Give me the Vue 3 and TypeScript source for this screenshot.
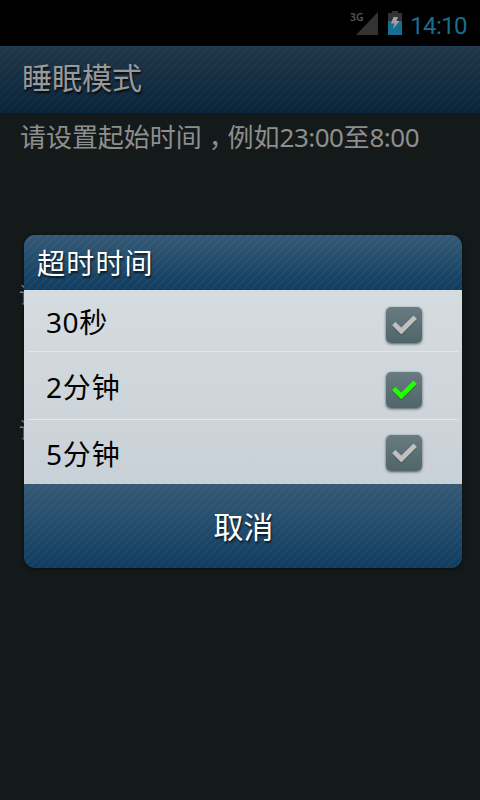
<script setup lang="ts">
import { ref } from 'vue'

interface Option {
  count: string
  unit: string
  size: string
}

const options: Option[] = [
  { count: '30', unit: '秒', size: 'first' },
  { count: '2', unit: '分钟', size: 'middle' },
  { count: '5', unit: '分钟', size: 'last' },
]
const selected = ref(1)
</script>

<template>
  <div class="screen">
    <header class="status">
      <svg class="signal" width="30" height="26" viewBox="0 0 30 26">
        <path d="M29 1V24H7Z" fill="#333" />
        <text x="1" y="10" font-size="10.5" font-weight="600" fill="#555">3G</text>
      </svg>
      <svg class="battery" width="14" height="24" viewBox="0 0 14 24">
        <path d="M4 0H10V2H14V10H0V2H4Z" fill="#333" />
        <path d="M0 10H14V24H0Z" fill="#166f93" />
        <path d="M5.5 6H10L8.5 10H11.5L5 18L6.5 12.5H3Z" fill="#a0a0a0" />
      </svg>
      <span class="clock">14:10</span>
    </header>
    <div class="titlebar"><h1>睡眠模式</h1></div>
    <main class="content">
      <p>请设置起始时间<span class="comma">，</span>例如<span class="time">23:00</span>至<span class="time">8:00</span></p>
      <p class="second">请</p>
      <p class="third">请</p>
    </main>

    <section class="dialog">
      <h2 class="dialog-title">超时时间</h2>
      <ul class="list">
        <li
          v-for="(option, i) in options"
          :key="option.count"
          :class="['row', option.size]"
          @click="selected = i"
        >
          <span class="label"><span class="count">{{ option.count }}</span>{{ option.unit }}</span>
          <span class="box">
            <svg :class="['check', { on: selected === i }]" width="36" height="36" viewBox="0 0 36 36">
              <path class="mark-shadow" d="M7.8 17.6L15.3 25L29.2 11.2" />
              <path class="mark" d="M7.8 16.6L15.3 24L29.2 10.2" />
            </svg>
          </span>
        </li>
      </ul>
      <button class="cancel" type="button">取消</button>
    </section>
  </div>
</template>

<style>
body {
  margin: 0;
  background: #141a1a;
}
</style>

<style scoped>
.screen {
  position: relative;
  width: 480px;
  height: 800px;
  overflow: hidden;
  background: #141a1a;
  font-family: 'Noto Sans', 'Noto Sans CJK SC', sans-serif;
}
.status {
  display: flex;
  box-sizing: border-box;
  height: 46px;
  padding: 11px 13px 0 0;
  justify-content: flex-end;
  background: #000;
}
.signal {
  margin-right: 9px;
  overflow: visible;
}
.battery {
  margin-right: 8px;
}
.clock {
  font-family: Roboto, sans-serif;
  font-size: 24px;
  letter-spacing: -0.6px;
  line-height: 31px;
  color: #166f93;
}
.titlebar {
  box-sizing: border-box;
  height: 67px;
  padding-left: 22px;
  border-top: 1px solid #233d52;
  background:
    repeating-linear-gradient(135deg, rgba(255, 255, 255, 0.025) 0 2px, transparent 2px 5.657px),
    linear-gradient(#203747, #0a243b);
}
h1 {
  margin: 0;
  font-size: 30px;
  font-weight: 400;
  line-height: 61px;
  color: #999;
  text-shadow: 1px 2px 2px rgba(0, 0, 0, 0.8);
}
.content {
  padding-left: 20px;
  color: #8e8e8e;
  font-size: 26px;
}
.content p {
  height: 48px;
  margin: 0;
  line-height: 48px;
  letter-spacing: -0.05px;
  white-space: nowrap;
}
.content .second {
  margin-top: 109px;
  margin-left: -1px;
  font-size: 22px;
}
.content .third {
  margin-top: 87px;
  margin-left: -1px;
  font-size: 22px;
}
/* Half-width comma centred in a full-width cell */
.comma {
  padding: 0 6px 0 7px;
  font-family: 'Noto Sans CJK SC', sans-serif;
  font-feature-settings: 'halt' 1;
  line-height: 0;
}
.time {
  letter-spacing: -0.5px;
}
.dialog {
  position: absolute;
  top: 235px;
  left: 24px;
  width: 438px;
  border-radius: 11px;
  overflow: hidden;
  box-shadow: 0 1px 4px rgba(0, 0, 0, 0.6);
  color: #fff;
}
.dialog-title,
.cancel {
  background:
    repeating-linear-gradient(135deg, rgba(255, 255, 255, 0.04) 0 2px, transparent 2px 5.657px),
    linear-gradient(#355976, #103d60);
  text-shadow: 1px 2px 2px rgba(0, 0, 0, 0.7);
}
.dialog-title {
  height: 55px;
  margin: 0;
  padding-left: 13px;
  font-size: 28px;
  font-weight: 400;
  letter-spacing: 1.2px;
  line-height: 56px;
}
.list {
  height: 194px;
  margin: 0;
  padding: 0 4px;
  list-style: none;
  background: linear-gradient(#d4dcdf, #c9d1d8);
}
.row {
  display: flex;
  box-sizing: border-box;
  padding: 0 36px 0 18px;
  align-items: flex-start;
  justify-content: space-between;
  color: #000;
}
.row.first {
  height: 62px;
  padding-top: 17px;
  border-bottom: 1px solid #e2e8ea;
}
.row.middle {
  height: 68px;
  padding-top: 20px;
  border-bottom: 1px solid #e2e8ea;
}
.row.last {
  height: 64px;
  padding-top: 15px;
}
.label {
  font-size: 28px;
  letter-spacing: 1px;
  line-height: 30px;
}
.count {
  letter-spacing: 0.6px;
}
.last .label {
  padding-top: 4px;
}
.box {
  width: 36px;
  height: 36px;
  border-radius: 5px;
  background: linear-gradient(#677b80, #50656a);
  box-shadow: 0 1px 3px rgba(0, 0, 0, 0.6);
}
.check {
  display: block;
  fill: none;
  stroke-width: 4.8;
}
.mark-shadow {
  stroke: rgba(0, 0, 0, 0.3);
}
.mark {
  stroke: #c0c0c0;
}
.on .mark {
  stroke: #2f0;
}
.cancel {
  display: block;
  width: 100%;
  height: 84px;
  padding: 2px 0 0 1px;
  border: 0;
  color: #fff;
  font-family: inherit;
  font-size: 30px;
  line-height: 82px;
}
</style>
